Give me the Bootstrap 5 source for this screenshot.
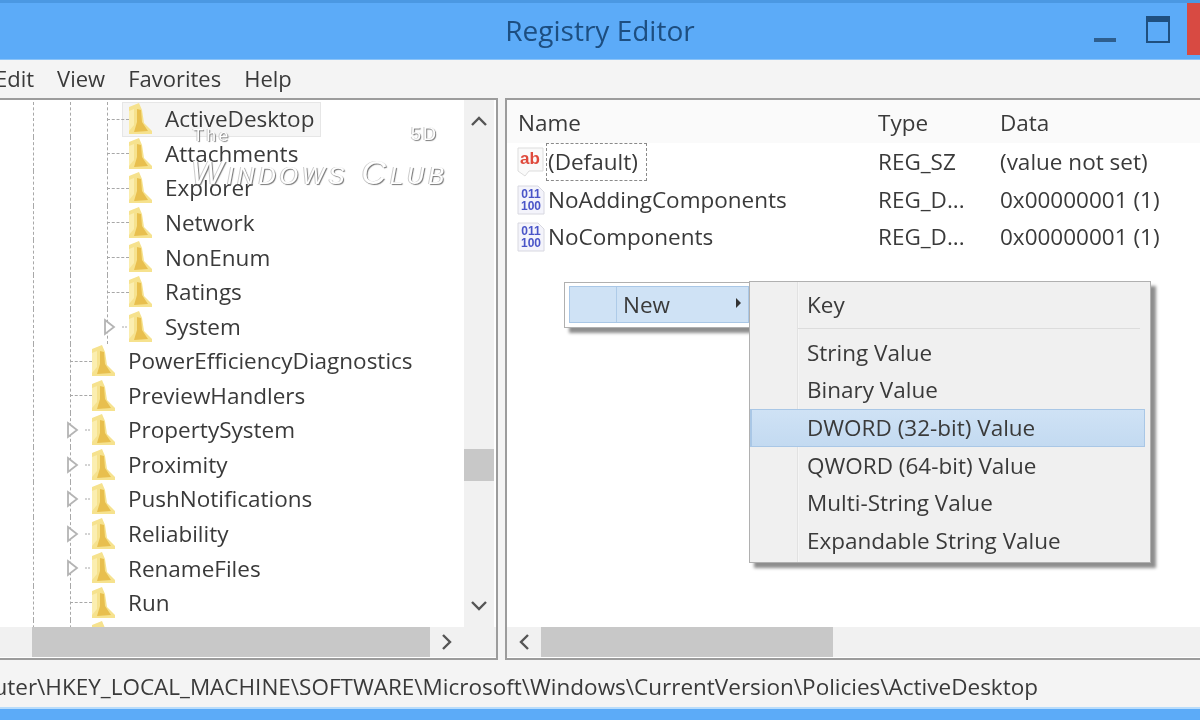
<!doctype html>
<html lang="en"><head><meta charset="utf-8"><title>Registry Editor</title>
<link href="https://cdn.jsdelivr.net/npm/bootstrap@5.3.0/dist/css/bootstrap.min.css" rel="stylesheet">
<style>
html,body{margin:0;height:720px;overflow:hidden;background:#f4f4f4}
.reg-win{width:1200px;height:720px;position:relative;overflow:hidden;font-family:"Open Sans","Noto Sans",sans-serif;font-size:22.5px;color:#3a3a3a;filter:blur(.65px);background:#f4f4f4}
.reg-title{height:60px;background:#5cabf8;border-top:3px solid #4b98e2;border-bottom:1px solid #8cc4f8;flex:none}
.reg-title-text{font-size:28px;color:#1d4e80;line-height:54px;top:3px}
.reg-ctl{flex:none}
.reg-min{width:22px;height:4px;background:#2e5e8e;margin:35px 30px 0 0}
.reg-max{width:24px;height:27px;border:2px solid #1f4f7f;border-top-width:6px;margin:13px 17px 0 0}
.reg-close{width:13px;height:52px;background:#d84a42}
.reg-menu{height:38px;flex:none;gap:23px;margin-left:-5px;line-height:37px;font-size:22px}
.reg-main{height:562px;flex:none;gap:7px}
.reg-left{width:498px;border:solid #9c9c9c;border-width:2px 2px 2px 0;background:#fff;flex:none}
.reg-right{flex:1 1 0;border:solid #9c9c9c;border-width:2px 0 2px 2px;background:#fff;min-width:0}
.reg-tree{overflow:hidden;position:relative;flex:1 1 0;padding-top:2px}
.reg-row{height:34.55px;position:relative;display:flex;align-items:center}
.reg-guide{width:37px;height:100%;flex:none;border-left:1px dashed #a8a8a8}
.reg-guide-a{margin-left:33px}
.reg-stub{width:22px;height:0;border-top:1px dashed #a8a8a8;flex:none}
.reg-guide-s{width:0;height:100%;flex:none;border-left:1px dashed #a8a8a8;margin-right:-1px}
.reg-exp{width:24px;flex:none;display:flex;align-items:center;margin-left:-4px;margin-right:2px}
.reg-folder{width:24px;height:32px;flex:none;margin-right:13px;margin-left:-1px}
.reg-row>*{z-index:1}
.reg-sel{position:absolute;left:122px;width:199px;top:0;bottom:0;background:#f5f5f5;border:1px solid #e6e6e6}
.reg-row>.reg-sel{z-index:0}
.reg-vs{width:30px;flex:none;background:#f1f1f1;margin-right:2px}
.reg-spacer{flex:1 1 0}
.reg-vthumb{height:32px;background:#c8c8c8}
.reg-hs{height:30px;background:#f1f1f1;flex:none;margin-bottom:1px}
.reg-hthumb-l{width:398px;margin-left:32px;background:#c8c8c8;height:100%}
.reg-hthumb-r{width:292px;background:#c8c8c8;height:100%}
.reg-arrow{flex:none;display:flex;align-items:center;justify-content:center}
.reg-tbl{margin:0;--bs-table-bg:transparent;--bs-table-color:#3a3a3a;font-size:22.5px;table-layout:fixed;width:693px}
.reg-tbl th{font-weight:400;height:43px;background:#fafafa;padding:3px 0 0 11px;vertical-align:middle}
.reg-tbl th+th{padding-left:3px}
.reg-tbl td{height:37.7px;padding:0 0 0 3px;vertical-align:middle;white-space:nowrap}
.reg-tbl td:first-child{padding-left:10px}
.reg-cell{display:flex;align-items:center;gap:3px}
.reg-focus{outline:1px dashed #8a8a8a;padding:0 8px 0 1px;line-height:36px;margin-left:-1px}
.reg-status{height:47px;flex:none;justify-content:flex-end;padding-right:162px;white-space:nowrap;overflow:hidden;line-height:54px}
.reg-foot{height:13px;background:#5cabf8;border-top:2px solid #b8dcfb;flex:none}
.reg-ctx,.reg-sub{--bs-dropdown-padding-y:0;--bs-dropdown-min-width:0;--bs-dropdown-border-radius:0;--bs-dropdown-font-size:22.5px;--bs-dropdown-color:#3a3a3a;--bs-dropdown-link-color:#3a3a3a;--bs-dropdown-bg:#f0f0f0;--bs-dropdown-border-color:#b0b0b0;--bs-dropdown-item-padding-x:0;--bs-dropdown-item-padding-y:0;box-shadow:5px 5px 3px #8e8e8e}
.reg-ctx{left:564px;top:282px;width:186px;height:46px;background:#fff;padding:3px 0 4px 4px;z-index:2}
.reg-ctxitem{height:100%;background:#cfe2f5;border:1px solid #a9c7e6;display:flex;align-items:center;position:relative}
.reg-ctxgut{width:47px;height:100%;border-right:1px solid #aecbe8;margin-right:6px}
.reg-caret{position:absolute;right:7px;top:11px;width:0;height:0;border-left:5px solid #333;border-top:5px solid transparent;border-bottom:5px solid transparent}
.reg-sub{left:749px;top:281px;width:402px;height:282px;z-index:3;background:linear-gradient(90deg,#f0f0f0 47px,#e2e2e2 47px,#e2e2e2 48px,#fafafa 48px,#f0f0f0 49px)}
.reg-sub .dropdown-item{height:37.7px;line-height:36px;padding-left:55px;margin-right:5px;width:auto;background:transparent;border:1px solid transparent;border-left-width:2px;color:#3a3a3a}
.reg-sub .reg-hi{background:linear-gradient(#cfe2f5,#c3daf1);border-color:#a9c7e6}
.reg-sub .dropdown-divider{margin:4px 10px 5px 48px;border-color:#dcdcdc;opacity:1}
.reg-first{margin-top:4px}
.reg-wm{position:absolute;z-index:1;color:#fff;text-shadow:1px 1px 1px #777,-1px 0 0 #ccc;font-family:"Liberation Sans",sans-serif;line-height:1;pointer-events:none}
.reg-wm1{left:193px;top:127px;font-size:17px;letter-spacing:3px}
.reg-wm2{left:191px;top:155px;font-size:34px;letter-spacing:3.8px;font-variant:small-caps;font-style:italic}
.reg-wm3{left:411px;top:125px;font-size:18px;letter-spacing:2px}
</style></head>
<body>
<svg width="0" height="0" class="position-absolute" aria-hidden="true"><defs>
<symbol id="fold" viewBox="0 0 24 32"><path d="M1 4 L11 0 L14 7 L16 20 L24 28 L24 31 L1 31Z" fill="#f6e28e"/><path d="M9 6 L13 7 L14 19 L20 28 L6 29 L9 19Z" fill="#e8bf4e"/><path d="M1 8 L6 6 L6 22 L1 28Z" fill="#fbeeb0"/></symbol>
<symbol id="expd" viewBox="0 0 24 18"><path d="M2 2 L11 9 L2 16Z" fill="#fff" stroke="#b4b4b4" stroke-width="1.8"/><path d="M19 9 H24" stroke="#a8a8a8" stroke-width="1" stroke-dasharray="2 1"/></symbol>
<symbol id="binic" viewBox="0 0 28 30"><path d="M1 1H21L27 7V29H1Z" fill="#f4f4fb" stroke="#d8d8e0"/><text x="14" y="13" text-anchor="middle" font-family="Liberation Sans" font-weight="700" font-size="12" fill="#4a55c8">011</text><text x="14" y="25" text-anchor="middle" font-family="Liberation Sans" font-weight="700" font-size="12" fill="#4a55c8">100</text></symbol>
</defs></svg>

<div class="reg-win d-flex flex-column">
  <div class="reg-title d-flex">
    <div class="reg-spacer"></div>
    <div class="reg-title-text position-absolute start-0 end-0 text-center">Registry Editor</div>
    <div class="reg-ctl reg-min"></div><div class="reg-ctl reg-max"></div><div class="reg-ctl reg-close"></div>
  </div>
  <div class="reg-menu d-flex"><span>Edit</span><span>View</span><span>Favorites</span><span>Help</span></div>
  <div class="reg-main d-flex">
    <div class="reg-left d-flex flex-column">
      <div class="d-flex flex-grow-1" style="min-height:0">
        <div class="reg-tree" id="tree"></div>
        <div class="reg-vs d-flex flex-column">
          <div class="reg-arrow" style="height:42px"><svg width="18" height="12" viewBox="0 0 18 12"><path d="M2 10 L9 3 L16 10" fill="none" stroke="#555" stroke-width="2.4"/></svg></div>
          <div style="height:307px"></div>
          <div class="reg-vthumb"></div>
          <div class="reg-spacer"></div>
          <div class="reg-arrow" style="height:42px"><svg width="18" height="12" viewBox="0 0 18 12"><path d="M2 2 L9 9 L16 2" fill="none" stroke="#555" stroke-width="2.4"/></svg></div>
        </div>
      </div>
      <div class="reg-hs d-flex">
        <div class="reg-hthumb-l"></div>
        <div class="reg-arrow" style="width:33px"><svg width="12" height="18" viewBox="0 0 12 18"><path d="M2 2 L9 9 L2 16" fill="none" stroke="#555" stroke-width="2.4"/></svg></div>
      </div>
    </div>
    <div class="reg-right d-flex flex-column">
      <div class="flex-grow-1" style="min-height:0;overflow:hidden">
        <table class="table table-borderless reg-tbl">
          <colgroup><col style="width:368px"><col style="width:122px"><col></colgroup>
          <thead><tr><th>Name</th><th>Type</th><th>Data</th></tr></thead>
          <tbody>
            <tr><td><div class="reg-cell"><svg width="28" height="30" viewBox="0 0 28 30"><path d="M1 1H26V24H12L8 29L1 24Z" fill="#fafafa" stroke="#ddd"/><text x="13" y="17" text-anchor="middle" font-family="Liberation Sans" font-weight="700" font-size="17" fill="#df4a3c">ab</text></svg><span class="reg-focus">(Default)</span></div></td><td>REG_SZ</td><td>(value not set)</td></tr>
            <tr><td><div class="reg-cell"><svg width="28" height="30"><use href="#binic"/></svg><span>NoAddingComponents</span></div></td><td>REG_D...</td><td>0x00000001 (1)</td></tr>
            <tr><td><div class="reg-cell"><svg width="28" height="30"><use href="#binic"/></svg><span>NoComponents</span></div></td><td>REG_D...</td><td>0x00000001 (1)</td></tr>
          </tbody>
        </table>
      </div>
      <div class="reg-hs d-flex">
        <div class="reg-arrow" style="width:34px"><svg width="12" height="18" viewBox="0 0 12 18"><path d="M10 2 L3 9 L10 16" fill="none" stroke="#555" stroke-width="2.4"/></svg></div>
        <div class="reg-hthumb-r"></div>
      </div>
    </div>
  </div>
  <div class="reg-status d-flex"><span>Computer\HKEY_LOCAL_MACHINE\SOFTWARE\Microsoft\Windows\CurrentVersion\Policies\ActiveDesktop</span></div>
  <div class="reg-foot"></div>

  <div class="reg-wm reg-wm1">The</div>
  <div class="reg-wm reg-wm2">Windows Club</div>
  <div class="reg-wm reg-wm3">5D</div>

  <div class="dropdown-menu show reg-ctx"><div class="reg-ctxitem"><div class="reg-ctxgut"></div><span>New</span><span class="reg-caret"></span></div></div>
  <div class="dropdown-menu show reg-sub">
    <a class="dropdown-item reg-first" href="#">Key</a>
    <hr class="dropdown-divider">
    <a class="dropdown-item" href="#">String Value</a>
    <a class="dropdown-item" href="#">Binary Value</a>
    <a class="dropdown-item reg-hi" href="#">DWORD (32-bit) Value</a>
    <a class="dropdown-item" href="#">QWORD (64-bit) Value</a>
    <a class="dropdown-item" href="#">Multi-String Value</a>
    <a class="dropdown-item" href="#">Expandable String Value</a>
  </div>
</div>
<script>
const F='<svg class="reg-folder"><use href="#fold"/></svg>';
const rows=[['ActiveDesktop',2,0,1],['Attachments',2],['Explorer',2],['Network',2],['NonEnum',2],['Ratings',2],['System',2,1],
['PowerEfficiencyDiagnostics',1],['PreviewHandlers',1],['PropertySystem',1,1],['Proximity',1,1],['PushNotifications',1,1],['Reliability',1,1],['RenameFiles',1,1],['Run',1],['',1]];
document.getElementById('tree').innerHTML=rows.map(([t,l,e,s])=>{
 const x=e?'<span class="reg-exp"><svg width="24" height="18"><use href="#expd"/></svg></span>':'<span class="reg-stub"></span>';
 const g=l==2?'<span class="reg-guide reg-guide-a"></span><span class="reg-guide"></span>':'<span class="reg-guide reg-guide-a"></span>';
 return '<div class="reg-row">'+(s?'<span class="reg-sel"></span>':'')+g+'<span class="reg-guide-s"></span>'+x+F+'<span>'+t+'</span></div>';
}).join('');
</script>
</body></html>
